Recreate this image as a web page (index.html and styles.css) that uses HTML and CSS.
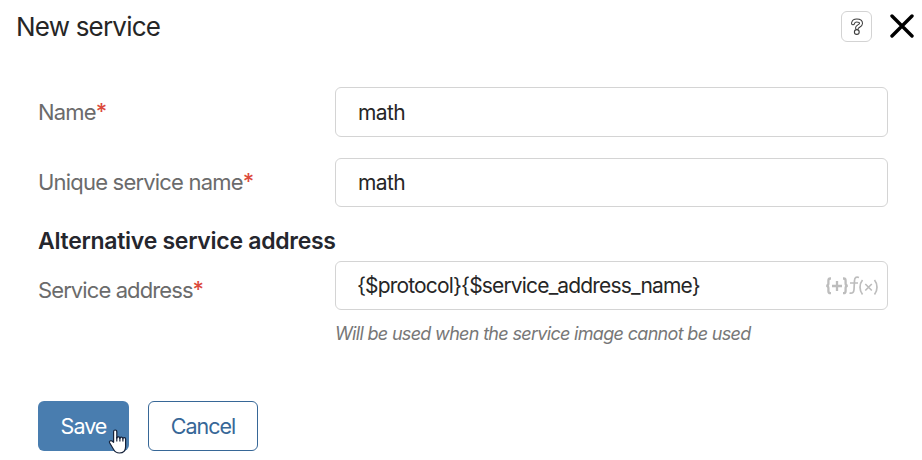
FILE: index.html
```html
<!DOCTYPE html>
<html lang="en">
<head>
<meta charset="utf-8">
<title>New service</title>
<link rel="stylesheet" href="styles.css">
</head>
<body>
<main class="dialog">
  <header class="header">
    <h1 class="title">New service</h1>
    <div class="tools">
      <button class="help" aria-label="Help">
        <svg width="14" height="18" viewBox="0 0 14 18" fill="none" stroke-linecap="round" stroke-linejoin="round">
          <path d="M3 5.300C3.400 3.400 4.800 2.600 6.800 2.600c2.600 0 4.200 1.100 4.200 2.900 0 2.400-4 2.400-4 4.600" stroke="#3a3a3a" stroke-width="4"/>
          <path d="M3 5.300C3.400 3.400 4.800 2.600 6.800 2.600c2.600 0 4.200 1.100 4.200 2.900 0 2.400-4 2.400-4 4.600" stroke="#fff" stroke-width="2"/>
          <circle cx="6.800" cy="14" r="2.400" fill="#fff" stroke="#3a3a3a" stroke-width="1.100"/>
        </svg>
      </button>
      <button class="close" aria-label="Close">
        <svg width="24" height="24" viewBox="0 0 24 24" stroke="#000" stroke-width="3.400" stroke-linecap="round"><path d="M2 2l20 20M22 2L2 22"/></svg>
      </button>
    </div>
  </header>
  <form class="form">
    <div class="row row-name">
      <label class="label">Name<span class="req">*</span></label>
      <div class="field field-short">math</div>
    </div>
    <div class="row row-unique">
      <label class="label label-unique">Unique service name<span class="req">*</span></label>
      <div class="field field-short">math</div>
    </div>
    <h2 class="section">Alternative service address</h2>
    <div class="row row-address">
      <label class="label label-address">Service address<span class="req">*</span></label>
      <div class="field"><span>{$protocol}{$service_address_name}</span>
        <span class="actions"><svg class="fx" width="54" height="22" viewBox="0 0 54 22" fill="none" stroke="#bdbdbd" stroke-width="1.700">
          <path d="M6 3.500H5.300Q3.400 3.500 3.400 5.700V8.500Q3.400 10.800 1.200 10.800Q3.400 10.800 3.400 13.100V16Q3.400 18.200 5.300 18.200H6M18 3.500h.7q1.900 0 1.900 2.200v2.800q0 2.300 2.200 2.300q-2.200 0-2.200 2.300V16q0 2.200-1.900 2.200H18M7 11h10M12 6v10" stroke-width="2.300"/>
          <path d="M34 2.500C31 1.500 29.700 2.600 29.500 5.500L29 14.500C28.800 17.500 27.500 18.700 24.500 18M25 8h8"/>
          <path d="M37.500 5c-3.300 4-3.300 10.500 0 14.500M49.500 5c3.300 4 3.300 10.500 0 14.500M40.300 9l6.500 6.500M46.800 9l-6.500 6.500"/>
        </svg></span>
      </div>
    </div>
    <p class="hint">Will be used when the service image cannot be used</p>
  </form>
  <footer class="footer">
    <button class="button save">Save
      <svg class="cursor" width="19" height="25" viewBox="0 0 19 25"><path d="M7.200 1c-1 0-1.600.7-1.600 1.700v10.600L4 12c-1.200-1-3.300.1-2.400 1.800l4 6.700c1.300 2.300 3 3.500 5.800 3.500 4.200 0 6.200-2.500 6.200-6.300V10c0-1.600-2.500-1.900-2.700-.2 0-2-2.800-2.200-3-.4 0-1.800-2.900-2-3.100-.2V2.700C8.800 1.700 8.200 1 7.200 1Z" fill="#fff" stroke="#142038" stroke-width="1.200" stroke-linejoin="round"/><path d="M8.800 8v4.500M11.900 9v3.500M14.900 9.500v3" stroke="#142038" stroke-width="1.200"/></svg>
    </button>
    <button class="button cancel">Cancel</button>
  </footer>
</main>
</body>
</html>
```
FILE: styles.css
```css
* { box-sizing: border-box; }
body { margin: 0; background: #fff; font-family: Inter, "Liberation Sans", sans-serif; color: #262626; }
button { font: inherit; padding: 0; background: none; border: 0; }
svg { display: block; }
.dialog { width: 922px; height: 460px; overflow: hidden; }
.header { display: flex; justify-content: space-between; align-items: center; height: 53px; padding: 0 8px 0 16px; }
.title { margin: 0; font-size: 26px; font-weight: 400; letter-spacing: -.8px; line-height: 32px; }
.tools { display: flex; align-items: center; gap: 18px; }
.help { display: flex; align-items: center; justify-content: center; width: 31px; height: 31px; border: 1px solid #d3d3d3; border-radius: 6px; }
.close { margin-top: -2px; }
.form { padding: 34px 34px 0 38px; }
.row { display: grid; grid-template-columns: 297px 553px; align-items: center; }
.row-name { height: 50px; }
.row-unique { height: 49px; margin-top: 21px; }
.row-address { height: 49px; }
.label { font-size: 22px; line-height: 28px; letter-spacing: -.8px; color: #6b6b6b; white-space: nowrap; }
.label-unique { padding-bottom: 1px; }
.label-address { padding-top: 9px; letter-spacing: -.9px; }
.req { position: relative; top: -1px; color: #dc4a3d; font-weight: 500; }
.field { display: flex; justify-content: space-between; align-items: center; height: 100%; padding: 0 8px 0 21px; border: 1px solid #d4d4d4; border-radius: 6px; font-size: 21px; letter-spacing: -.84px; }
.field-short { padding-left: 22px; letter-spacing: -.6px; }
.section { margin: 20px 0 5px; font-size: 23px; line-height: 29px; font-weight: 600; letter-spacing: -.28px; color: #25262d; }
.actions { display: flex; align-items: center; }
.hint { margin: 11px 0 0 297px; font-size: 18px; line-height: 26px; font-style: italic; letter-spacing: -.68px; color: #777; white-space: nowrap; }
.footer { display: flex; gap: 19px; padding: 54px 0 0 38px; }
.button { position: relative; height: 50px; border-radius: 6px; font-size: 21.500px; letter-spacing: -1px; }
.save { width: 91px; background: #497daf; color: #fff; }
.cancel { width: 110px; border: 1px solid #376797; color: #376797; }
.cursor { position: absolute; left: 70px; top: 28px; }
```
